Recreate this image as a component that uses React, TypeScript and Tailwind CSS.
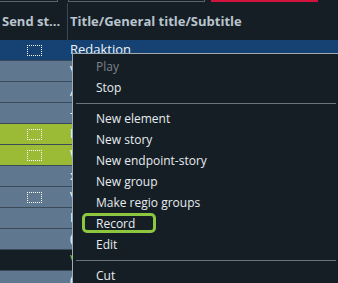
import React from 'react';

interface Row {
  title: string;
  tone: 'selected' | 'plain' | 'green' | 'dark';
  checkbox?: boolean;
}

const rows: Row[] = [
  { title: 'Redaktion', tone: 'selected', checkbox: true },
  { title: 'Vorschau', tone: 'plain' },
  { title: 'Aktuell', tone: 'plain' },
  { title: '- Trenner', tone: 'plain' },
  { title: 'Fernsehen', tone: 'green', checkbox: true },
  { title: 'Wetter', tone: 'green', checkbox: true },
  { title: 'x Extra', tone: 'plain' },
  { title: 'Verkehr', tone: 'plain', checkbox: true },
  { title: 'Info', tone: 'plain' },
  { title: '(Sport)', tone: 'plain' },
  { title: 'Vorspann', tone: 'dark' },
  { title: '(Abspann)', tone: 'plain' },
];

const toneClass: Record<Row['tone'], string> = {
  selected: 'bg-[#154273] text-[#eef3f7]',
  plain: 'bg-[#5f778f] text-white',
  green: 'bg-[#9bbb36] text-white',
  dark: 'bg-[#161e25] text-[#8dc63f]',
};

type MenuEntry = { label: string; disabled?: boolean; marked?: boolean } | 'sep';

const menu: MenuEntry[] = [
  { label: 'Play', disabled: true },
  { label: 'Stop' },
  'sep',
  { label: 'New element' },
  { label: 'New story' },
  { label: 'New endpoint-story' },
  { label: 'New group' },
  { label: 'Make regio groups' },
  { label: 'Record', marked: true },
  { label: 'Edit' },
  'sep',
  { label: 'Cut' },
];

export default function App() {
  return (
    <div
      className="relative w-[338px] h-[283px] overflow-hidden bg-[#161e25]"
      style={{ fontFamily: '"Open Sans", "Noto Sans", sans-serif' }}
    >
      {/* toolbar remnants */}
      <div className="flex h-[3px] items-start">
        <div className="w-[58px] h-[2px] border-b border-r border-[#5a646c]" />
        <div className="ml-[10px] w-[137px] h-[2px] border-b border-l border-r border-[#5a646c]" />
        <div className="ml-[6px] w-[107px] h-[2px] bg-[#d0123c]" />
      </div>

      {/* header */}
      <div className="grid grid-cols-[68px_1fr] h-[37px] text-[13px] font-bold text-[#b9c4ce]">
        <div className="flex items-center pl-[2px] border-r border-[#3b4753] whitespace-nowrap">Send st...</div>
        <div className="flex items-center pl-[2px] whitespace-nowrap">Title/General title/Subtitle</div>
      </div>

      {/* rows */}
      {rows.map((row, i) => (
        <div
          key={i}
          className={`grid grid-cols-[68px_1fr] h-[21px] border-b border-[#3b4a58] text-[13px] ${toneClass[row.tone]}`}
        >
          <div className="flex items-center justify-center">
            {row.checkbox && <div className="w-[15px] h-[11px] border border-dotted border-white" />}
          </div>
          <div className="flex items-center pl-[2px] whitespace-nowrap">{row.title}</div>
        </div>
      ))}

      {/* context menu */}
      <div className="absolute left-[72px] top-[53px] w-[280px] pt-[2px] pb-2 bg-[#161e25] border-l border-t border-[#a3acb4] text-[12px] text-[#e6ecf0]">
        {menu.map((entry, i) =>
          entry === 'sep' ? (
            <div key={i} className="flex items-center h-[10px] pl-[3px] pr-[16px]">
              <div className="h-px w-full bg-[#6b737a]" />
            </div>
          ) : (
            <div
              key={i}
              className={`relative flex items-center h-[21px] pl-[23px] ${entry.disabled ? 'text-[#7a848c]' : ''}`}
            >
              {entry.label}
              {entry.marked && (
                <div className="absolute left-[9px] top-0 w-[74px] h-[20px] rounded-[5px] border-[3px] border-[#8dc63f]" />
              )}
            </div>
          )
        )}
      </div>
    </div>
  );
}
